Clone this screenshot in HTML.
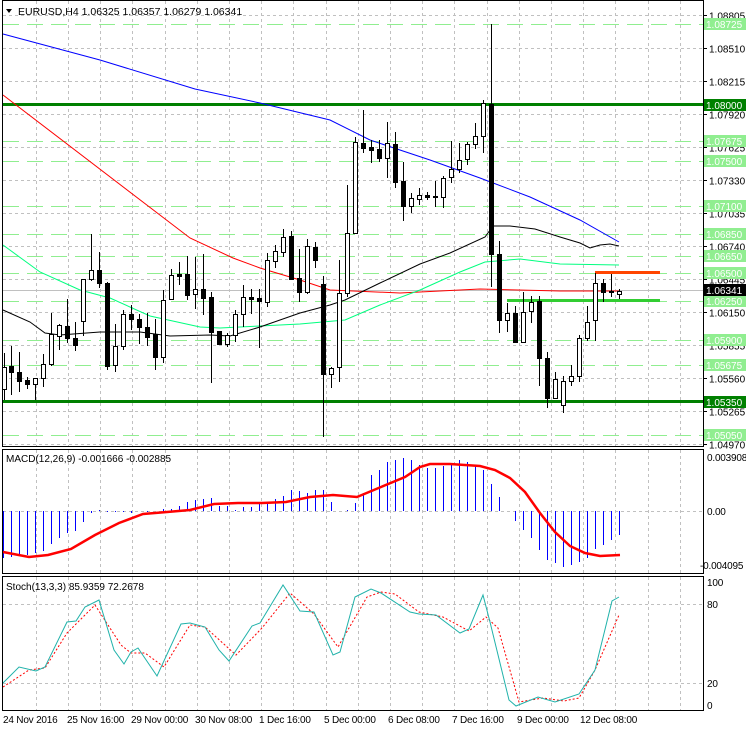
<!DOCTYPE html>
<html><head><meta charset="utf-8"><style>
html,body{margin:0;padding:0;background:#fff;}
svg{display:block;font-family:"Liberation Sans",sans-serif;}
</style></head><body>
<svg id="c" width="746" height="731" xmlns="http://www.w3.org/2000/svg">
<rect width="746" height="731" fill="#fff"/>
<g id="grid" stroke="#c0c0c0" stroke-dasharray="3,3" stroke-width="1"></g>
<g id="levels"></g>
<g id="ma" fill="none"></g>
<g id="cand"></g>
<g id="ind" fill="none"></g>
<g fill="none" stroke="#000">
<rect x="2.5" y="0.5" width="701" height="446"/>
<rect x="2.5" y="449.5" width="701" height="124"/>
<rect x="2.5" y="576.5" width="701" height="134"/>
</g>
<g id="axis" font-size="10" fill="#000"></g>
<polygon points="6,9 12,9 9,13" fill="#000"/>
<text x="18" y="15" font-size="10.5">EURUSD,H4  1.06325 1.06357 1.06279 1.06341</text>
<text x="6" y="462" font-size="10">MACD(12,26,9) -0.001666 -0.002885</text>
<text x="6" y="590" font-size="10">Stoch(13,3,3) 85.9359 72.2678</text>
<g font-size="10" letter-spacing="-0.2">
<text x="3" y="723">24 Nov 2016</text>
<text x="67" y="723">25 Nov 16:00</text>
<text x="131" y="723">29 Nov 00:00</text>
<text x="195" y="723">30 Nov 08:00</text>
<text x="259" y="723">1 Dec 16:00</text>
<text x="324" y="723">5 Dec 00:00</text>
<text x="388" y="723">6 Dec 08:00</text>
<text x="452" y="723">7 Dec 16:00</text>
<text x="517" y="723">9 Dec 00:00</text>
<text x="580" y="723">12 Dec 08:00</text>
<text x="707" y="461">0.003908</text>
<text x="707" y="515">0.00</text>
<text x="700" y="569">-0.004095</text>
<text x="707" y="586">100</text>
<text x="707" y="608">80</text>
<text x="707" y="687">20</text>
<text x="707" y="709">0</text>
</g>
</svg>
<script>
var NS="http://www.w3.org/2000/svg";
function el(p,t,a){var e=document.createElementNS(NS,t);for(var k in a)e.setAttribute(k,a[k]);document.getElementById(p).appendChild(e);return e;}
for(var k=1;k<=21;k++){var x=Math.round(3.5+32.2*k)+0.5;
 [[1,446],[450,573],[577,710]].forEach(function(r){el('grid','line',{x1:x,x2:x,y1:r[0],y2:r[1]});});}
var ticks=["1.08805","1.08510","1.08215","1.07920","1.07625","1.07330","1.07035","1.06740","1.06445","1.06150","1.05855","1.05560","1.05265","1.04970"];
function py(p){return 15+(1.08805-p)*11186;}
ticks.forEach(function(t){var y=Math.round(py(+t))+0.5;el('grid','line',{x1:3,x2:703,y1:y,y2:y});
 el('axis','line',{x1:703,x2:707,y1:y,y2:y,stroke:'#000'});
 var tx=el('axis','text',{x:709,y:y+4});tx.textContent=t;});
[511.5,604.5,683.5].forEach(function(y){el('grid','line',{x1:3,x2:703,y1:y,y2:y});});
var lg=["1.08725","1.07675","1.07500","1.07100","1.06850","1.06650","1.06500","1.06250","1.05900","1.05675","1.05050"];
lg.forEach(function(t){var y=Math.round(py(+t))+0.5;el('levels','line',{x1:3,x2:703,y1:y,y2:y,stroke:'#90ee90','stroke-dasharray':'16,8'});});
el('levels','line',{x1:507,x2:660,y1:300.5,y2:300.5,stroke:'#32cd32','stroke-width':3});
el('levels','line',{x1:595,x2:660,y1:272.5,y2:272.5,stroke:'#ff4500','stroke-width':3});
el('levels','line',{x1:3,x2:703,y1:290.5,y2:290.5,stroke:'#c0c0c0'});
el('levels','line',{x1:3,x2:703,y1:104.5,y2:104.5,stroke:'#008000','stroke-width':3});
el('levels','line',{x1:3,x2:703,y1:401.5,y2:401.5,stroke:'#008000','stroke-width':3});
lg.forEach(function(t){var y=Math.round(py(+t));el('axis','rect',{x:704,y:y-6,width:42,height:12,fill:'#90ee90'});
 var tx=el('axis','text',{x:706,y:y+4,fill:'#fff'});tx.textContent=t;});
[["1.08000",105,'#008000'],["1.05350",402,'#008000'],["1.06341",290,'#000']].forEach(function(a){
 el('axis','rect',{x:704,y:a[1]-6,width:42,height:12,fill:a[2]});var tx=el('axis','text',{x:706,y:a[1]+4,fill:'#fff'});tx.textContent=a[0];});
function pl(pts,col,w,dash){var a={points:pts.map(function(p){return p.join(',')}).join(' '),stroke:col,'stroke-width':w||1};if(dash)a['stroke-dasharray']=dash;el('ma','polyline',a);}
pl([[3,34],[100,60],[195,89],[260,103],[330,120],[370,140],[430,160],[480,178],[530,197],[580,220],[619,242]],'#0000ff');
pl([[3,95],[190,238],[233,258],[260,268],[300,280],[330,290],[400,293],[480,289],[560,291],[619,291]],'#ff0000');
pl([[3,245],[40,272],[80,290],[110,298],[150,316],[200,327],[220,328],[260,326],[300,324],[345,320],[380,305],[420,290],[460,272],[485,262],[520,259],[560,264],[619,265]],'#00ff7f');
pl([[3,310],[30,322],[45,333],[60,335],[100,332],[140,332],[170,336],[210,335],[230,336],[260,327],[300,313],[330,305],[345,300],[380,283],[420,264],[450,253],[485,237],[493,226],[510,226],[535,229],[560,237],[580,243],[590,248],[600,245],[610,244],[619,246]],'#000');
var C=[[4,353,367,389,400,1],[11,346,366,372,395,0],[19,352,372,381,392,0],[27,377,380,384,389,0],[35,378,378,384,400,1],[43,354,364,378,387,1],[51,313,334,364,366,1],[59,324,325,336,350,1],[67,299,326,338,343,0],[75,322,338,345,351,0],[83,279,279,321,336,1],[91,234,270,279,281,1],[99,252,270,283,288,0],[107,282,283,366,370,0],[115,324,346,365,372,1],[123,310,314,346,350,1],[131,305,314,319,330,0],[139,314,319,327,344,0],[147,313,327,337,346,0],[155,319,334,357,370,0],[163,290,300,357,363,1],[171,269,275,299,299,1],[179,262,274,276,285,0],[187,256,274,295,300,0],[195,257,289,294,309,1],[203,254,289,298,315,0],[211,292,297,332,383,0],[219,331,331,344,345,0],[227,333,335,344,347,1],[235,310,314,335,342,1],[243,285,297,314,327,1],[251,289,297,299,314,0],[259,289,298,301,348,0],[267,253,260,302,307,1],[275,245,251,261,268,1],[283,229,237,252,257,1],[291,231,236,279,279,0],[299,249,278,292,302,0],[307,239,246,292,294,1],[315,242,247,260,268,0],[323,276,284,374,437,0],[331,367,368,374,388,1],[339,260,293,367,382,1],[347,185,233,293,297,1],[355,137,142,233,233,1],[363,110,143,148,153,0],[371,140,147,150,163,0],[379,140,149,158,162,0],[387,122,143,158,178,1],[395,132,144,182,188,0],[403,162,181,206,221,0],[411,193,198,206,213,1],[419,188,195,199,205,1],[427,192,195,197,200,0],[435,181,196,197,207,0],[443,176,178,197,208,1],[451,141,169,177,183,1],[459,143,160,169,173,1],[467,142,144,159,165,1],[475,123,136,144,149,1],[483,100,103,136,153,1],[491,24,104,254,287,0],[499,241,254,320,333,0],[507,303,313,320,332,1],[515,306,313,342,343,0],[523,292,312,342,343,1],[531,296,302,311,323,1],[539,296,301,358,386,0],[547,352,358,398,408,0],[555,372,379,398,398,1],[563,376,381,405,413,1],[571,365,376,381,386,1],[579,335,338,376,382,1],[587,306,322,338,341,1],[595,273,283,320,341,1],[603,279,283,292,302,0],[611,274,291,292,297,0],[619,289,291,294,299,1]];
C.forEach(function(c){var x=c[0]+0.5;el('cand','line',{x1:x,x2:x,y1:c[1],y2:c[4],stroke:'#000'});
 var h=Math.max(c[3]-c[2],1);el('cand','rect',{x:c[0]-2+0.5,y:c[2]+0.5,width:4,height:h,fill:c[5]?'#fff':'#000',stroke:'#000'});});
var H=[558,557,555,555,553,551,544,538,533,531,522,513,510,512,512,512,513,511,512,511,509,509,506,502,500,499,498,506,506,510,507,507,502,502,499,496,490,491,493,490,490,502,511,510,503,493,475,470,462,460,458,460,465,468,468,466,463,460,462,465,470,484,497,511,521,530,538,550,560,563,567,565,562,558,549,545,540,535];
H.forEach(function(v,i){var x=3+8*i+0.5;el('ind','line',{x1:x,x2:x,y1:511,y2:v,stroke:'#0000ff'});});
function ip(pts,col,w,dash){var a={points:pts.map(function(p){return p.join(',')}).join(' '),stroke:col,'stroke-width':w||1};if(dash)a['stroke-dasharray']=dash;el('ind','polyline',a);}
ip([[3,552],[29,557],[48,555],[71,549],[95,535],[119,523],[143,514],[167,512],[190,510],[214,504],[238,503],[262,503],[286,502],[310,497],[333,495],[357,497],[381,487],[405,477],[420,467],[430,464],[450,464],[480,466],[495,470],[510,478],[525,492],[540,513],[555,532],[570,546],[585,553],[600,556],[620,555]],'#ff0000',2.5);
ip([[3,687],[29,670],[45,668],[67,633],[95,605],[121,645],[131,653],[145,653],[164,667],[190,625],[205,627],[236,655],[262,628],[290,593],[314,614],[338,647],[367,597],[381,592],[395,594],[419,612],[443,617],[469,631],[486,617],[498,628],[519,702],[543,698],[564,701],[579,698],[595,670],[619,615]],'#ff0000',1,'2,2');
ip([[3,683],[19,667],[36,671],[45,667],[67,622],[76,621],[85,607],[99,600],[114,650],[124,664],[131,652],[138,648],[157,676],[181,624],[190,623],[205,627],[219,650],[229,661],[252,626],[260,623],[283,585],[300,611],[314,612],[333,655],[340,652],[355,597],[371,589],[381,593],[410,612],[419,614],[436,615],[460,633],[469,629],[483,595],[490,622],[509,700],[516,706],[538,697],[555,702],[579,694],[595,670],[612,601],[619,597]],'#20b2aa',1);
</script>
</body></html>
